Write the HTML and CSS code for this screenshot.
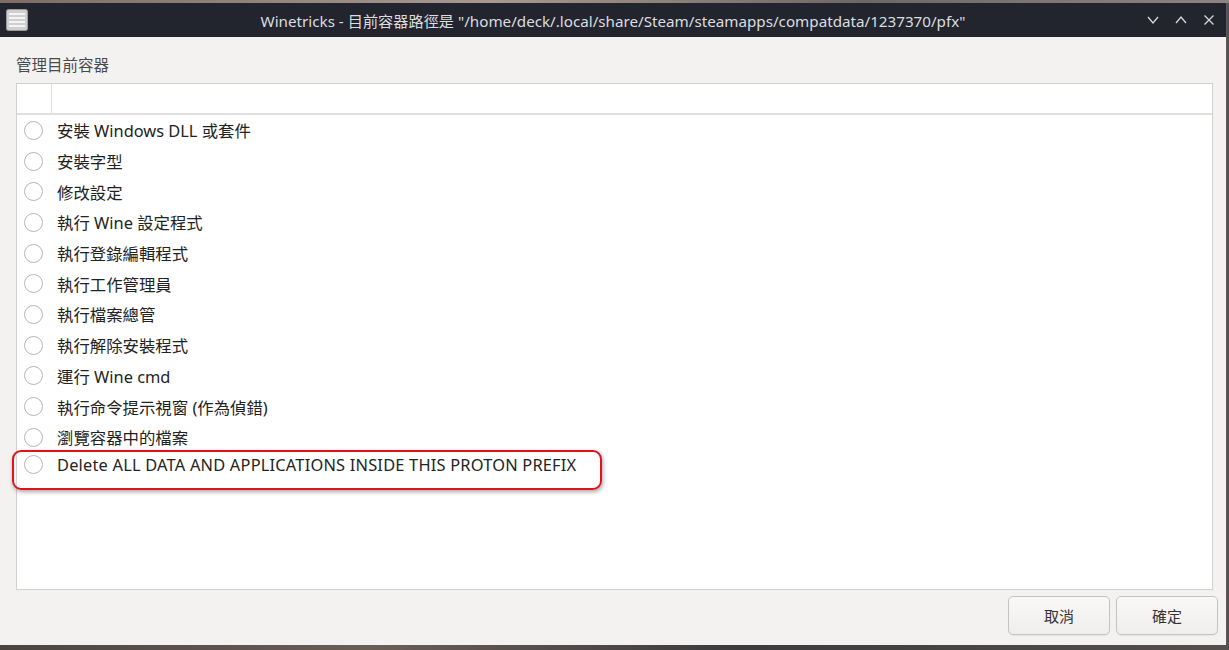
FILE: index.html
```html
<!DOCTYPE html>
<html lang="zh-Hant">
<head>
    <meta charset="UTF-8">
    <title>Winetricks</title>
    <link rel="stylesheet" href="styles.css">
</head>
<body>
    <div class="desktop-strip"></div>

    <div class="window">
        <!-- Title bar -->
        <div class="titlebar">
            <div class="app-icon">
                <svg width="22" height="22" viewBox="0 0 22 22">
                    <rect x="0.5" y="0.5" width="21" height="21" rx="2" fill="#cfcfcf" stroke="#9a9a9a"/>
                    <rect x="3" y="4" width="16" height="2" fill="#f4f4f4"/>
                    <rect x="3" y="8" width="16" height="2" fill="#f4f4f4"/>
                    <rect x="3" y="12" width="16" height="2" fill="#f4f4f4"/>
                    <rect x="3" y="16" width="16" height="2" fill="#f4f4f4"/>
                </svg>
            </div>
            <div class="title">Winetricks - 目前容器路徑是 "/home/deck/.local/share/Steam/steamapps/compatdata/1237370/pfx"</div>
            <div class="win-buttons">
                <svg width="14" height="14" viewBox="0 0 14 14"><path d="M2 4 L7 10 L12 4" fill="none" stroke="#d6d8dc" stroke-width="1.3"/></svg>
                <svg width="14" height="14" viewBox="0 0 14 14"><path d="M2 10 L7 4 L12 10" fill="none" stroke="#d6d8dc" stroke-width="1.3"/></svg>
                <svg width="14" height="14" viewBox="0 0 14 14"><path d="M2.5 2.5 L11.5 11.5 M11.5 2.5 L2.5 11.5" fill="none" stroke="#d6d8dc" stroke-width="1.3"/></svg>
            </div>
        </div>

        <!-- Dialog body -->
        <div class="body">
            <div class="caption">管理目前容器</div>
            <div class="listbox">
                <div class="list-header">
                    <div class="col-check"></div>
                    <div class="col-text"></div>
                </div>
                <div class="rows">
                    <label class="row"><span class="radio"></span>安裝 Windows DLL 或套件</label>
                    <label class="row"><span class="radio"></span>安裝字型</label>
                    <label class="row"><span class="radio"></span>修改設定</label>
                    <label class="row"><span class="radio"></span>執行 Wine 設定程式</label>
                    <label class="row"><span class="radio"></span>執行登錄編輯程式</label>
                    <label class="row"><span class="radio"></span>執行工作管理員</label>
                    <label class="row"><span class="radio"></span>執行檔案總管</label>
                    <label class="row"><span class="radio"></span>執行解除安裝程式</label>
                    <label class="row"><span class="radio"></span>運行 Wine cmd</label>
                    <label class="row"><span class="radio"></span>執行命令提示視窗 (作為偵錯)</label>
                    <label class="row"><span class="radio"></span>瀏覽容器中的檔案</label>
                    <label class="row marked"><span class="radio"></span>Delete ALL DATA AND APPLICATIONS INSIDE THIS PROTON PREFIX</label>
                </div>
            </div>
            <div class="actions">
                <button class="btn">取消</button>
                <button class="btn">確定</button>
            </div>
        </div>
    </div>
</body>
</html>
```

FILE: styles.css
```css
body {
    margin: 0;
    width: 1229px;
    height: 650px;
    overflow: hidden;
    background: linear-gradient(90deg, #4a4440, #6a5e58 30%, #3c3a3e 60%, #55504e);
    font-family: "Noto Sans", "Noto Sans CJK TC", sans-serif;
}
.desktop-strip {
    height: 3px;
    background: linear-gradient(90deg, #7a6e66, #a89890 40%, #6e6864 70%, #8c8480);
}
.window {
    width: 1226px;
    height: 642px;
    background-color: #f3f2f1;
    display: flex;
    flex-direction: column;
    border-right: 1px solid #5a5a60;
}
.titlebar {
    height: 34px;
    background-color: #22252d;
    display: flex;
    align-items: center;
    color: #dcdde0;
}
.app-icon {
    width: 22px;
    height: 22px;
    margin-left: 6px;
}
.app-icon svg {
    display: block;
}
.title {
    flex: 1;
    text-align: center;
    font-size: 15.2px;
    padding-left: 52px;
    white-space: nowrap;
}
.win-buttons {
    display: flex;
    gap: 14px;
    margin-right: 10px;
}
.win-buttons svg {
    display: block;
}
.body {
    flex: 1;
    display: flex;
    flex-direction: column;
    padding: 0 8px 0 16px;
}
.caption {
    font-size: 15.5px;
    color: #4a4a4a;
    height: 46px;
    line-height: 56px;
}
.listbox {
    height: 507px;
    width: 1197px;
    background: #fff;
    border: 1px solid #d2d1d0;
    box-sizing: border-box;
    display: flex;
    flex-direction: column;
}
.list-header {
    height: 29px;
    display: flex;
    border-bottom: 2px solid #e1e0df;
}
.col-check {
    width: 34px;
    border-right: 1px solid #e1e0df;
}
.rows {
    display: flex;
    flex-direction: column;
}
.row {
    height: 30.7px;
    display: flex;
    align-items: center;
    font-size: 16.4px;
    color: #232323;
    padding-left: 7px;
}
.radio {
    width: 17px;
    height: 17px;
    border: 1px solid #b8b6b4;
    border-radius: 50%;
    background: #fff;
    margin-right: 14px;
    flex-shrink: 0;
}
.row.marked {
    position: relative;
    height: 28px;
    margin-top: -2px;
    letter-spacing: 0.2px;
}
.row.marked::after {
    content: "";
    position: absolute;
    left: -5px;
    top: -1px;
    width: 586px;
    height: 36px;
    border: 2px solid #e3111a;
    border-radius: 9px;
    box-shadow: 1px 2px 4px rgba(0, 0, 0, 0.35);
}
.actions {
    display: flex;
    justify-content: flex-end;
    gap: 6px;
    margin-top: 6px;
}
.btn {
    width: 102px;
    height: 39px;
    border: 1px solid #c4c3c2;
    border-radius: 5px;
    background: linear-gradient(#f8f8f7, #efeeed);
    font-family: "Noto Sans CJK TC", sans-serif;
    font-size: 15px;
    color: #333;
    box-shadow: 0 1px 1px rgba(0, 0, 0, 0.05);
}
```
